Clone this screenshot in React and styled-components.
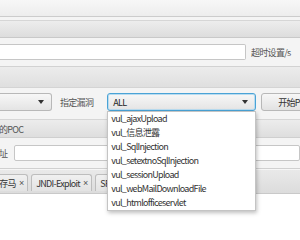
import React from "react";
import styled, { createGlobalStyle } from "styled-components";

const Global = createGlobalStyle`
  html, body { margin: 0; padding: 0; }
  body {
    width: 300px; height: 240px; overflow: hidden;
    background: #f4f4f4;
    font-family: "Noto Sans CJK SC", "Noto Sans", sans-serif;
    font-size: 9px; letter-spacing: -0.7px; color: #3a3a3a;
  }
`;

const Page = styled.div`
  display: flex; flex-direction: column; width: 300px; height: 240px; overflow: hidden;
`;

const Band = styled.div`
  height: ${p => p.$h}px;
  flex: none;
  background: ${p => p.$bg};
  border-bottom: 1px solid ${p => p.$line || "#d0d0d0"};
`;

const FieldRow = styled.div`
  display: flex; align-items: center; gap: 5px;
  padding: 6px 0 6px 0; flex: none;
  border-bottom: 1px solid #d2d2d2;
`;

const TextInput = styled.div`
  height: 14px; width: ${p => p.$w ? `${p.$w}px` : "auto"};
  flex: ${p => p.$w ? "none" : "1"};
  background: #fff;
  border: 1px solid #c6c6c6;
  border-left: ${p => p.$open ? "none" : "1px solid #c6c6c6"};
  border-radius: ${p => p.$open ? "0 2px 2px 0" : "2px"};
`;

const Label = styled.span`
  color: #555; font-size: 9px; white-space: nowrap; line-height: 1;
  margin-left: ${p => p.$ml || 0}px;
  margin-top: ${p => p.$mt || 0}px;
`;

const ControlRow = styled.div`
  display: flex; align-items: center;
  padding: 5px 0 8px 0; flex: none;
  border-bottom: 1px solid #d6d6d6;
`;

const ComboWrap = styled.div`
  position: relative; flex: none; margin-left: ${p => p.$ml || 0}px;
`;

const Combo = styled.div`
  display: flex; align-items: center; justify-content: space-between;
  box-sizing: border-box;
  width: ${p => p.$w}px; height: 18px; flex: none;
  padding: 0 7px 0 5px;
  background: linear-gradient(#f7f7f7, #e4e4e4);
  border: 1px solid ${p => p.$focus ? "#4aa3d6" : "#b8b8b8"};
  border-left: ${p => p.$cut ? "none" : undefined};
  box-shadow: ${p => p.$focus ? "inset 0 0 0 1px #b9dcf0" : "none"};
  border-radius: ${p => p.$cut ? "0 3px 3px 0" : "3px"};
  font-size: 9px; color: #222;
`;

const Arrow = styled.span`
  width: 0; height: 0;
  border-left: 3.5px solid transparent; border-right: 3.5px solid transparent;
  border-top: 4px solid #333;
`;

const Button = styled.div`
  box-sizing: border-box; height: 18px; flex: none;
  margin-left: 5px; padding: 0 0 0 16px; width: 60px;
  display: flex; align-items: center;
  background: linear-gradient(#f7f7f7, #e2e2e2);
  border: 1px solid #b8b8b8; border-radius: 3px;
  font-size: 9px; color: #333; white-space: nowrap; overflow: hidden;
`;

const Popup = styled.ul`
  position: absolute; left: 0; top: 100%; z-index: 5;
  width: 149px; box-sizing: border-box; margin: 0; padding: 0;
  list-style: none; background: #fff;
  border: 1px solid #c4c4c4;
  box-shadow: 1px 2px 4px rgba(0,0,0,0.25);
`;

const Item = styled.li`
  height: 14px; line-height: 14px; padding-left: 3px;
  font-size: 9px; color: #333; white-space: nowrap;
`;

const TitleBar = styled.div`
  height: 17px; flex: none; display: flex; align-items: center;
  background: linear-gradient(#ececec, #dedede);
  border-bottom: 1px solid #cfcfcf;
  overflow: hidden;
`;

const Content = styled.div`
  display: flex; align-items: center; gap: 7px;
  padding: 7px 0 7px 0; flex: none;
  border-bottom: 1px solid #d0d0d0;
  overflow: hidden;
`;

const TabHeader = styled.div`
  display: flex; align-items: flex-end; gap: 3px;
  height: 25px; flex: none; box-sizing: border-box;
  padding: 0 0 2px 0;
  background: linear-gradient(#e9e9e9, #dcdcdc);
  border-top: 1px solid #f6f6f6;
  border-bottom: 1px solid #c9c9c9;
  overflow: hidden;
`;

const Tab = styled.div`
  flex: none; height: 17px; box-sizing: border-box;
  display: flex; align-items: center; gap: 3px;
  padding: 0 3px 0 4px;
  background: linear-gradient(#f0f0f0, #e3e3e3);
  border: 1px solid #bdbdbd; border-bottom: none;
  border-radius: 3px 3px 0 0;
  margin-left: ${p => p.$ml || 0}px;
  font-size: 9px; color: #333; white-space: nowrap;
`;

const Close = styled.span`
  font-family: "Liberation Sans", sans-serif;
  font-size: 9px; letter-spacing: 0; color: #555;
`;

const White = styled.div`
  flex: 1; background: #fff;
`;

export default function App() {
  const items = [
    "vul_ajaxUpload",
    "vul_信息泄露",
    "vul_SqlInjection",
    "vul_setextnoSqlInjection",
    "vul_sessionUpload",
    "vul_webMailDownloadFile",
    "vul_htmlofficeservlet",
  ];
  return (
    <Page>
      <Global />
      <Band $h={16} $bg="linear-gradient(#f7f7f7, #ededed)" $line="#cccccc" />
      <Band $h={3} $bg="#f4f4f4" $line="#d6d6d6" />
      <Band $h={16} $bg="linear-gradient(#ededed, #dddddd)" $line="#c9c9c9" />
      <FieldRow>
        <TextInput $w={245} $open />
        <Label>超时设置/s</Label>
      </FieldRow>
      <Band $h={20} $bg="linear-gradient(#ececec, #dfdfdf)" $line="#d4d4d4" />
      <ControlRow>
        <Combo $w={52} $cut>
          <span />
          <Arrow />
        </Combo>
        <Label $ml={8}>指定漏洞</Label>
        <ComboWrap $ml={14}>
          <Combo $w={149} $focus>
            <span>ALL</span>
            <Arrow />
          </Combo>
          <Popup>
            {items.map(t => <Item key={t}>{t}</Item>)}
          </Popup>
        </ComboWrap>
        <Button>开始POC检测</Button>
      </ControlRow>
      <TitleBar>
        <Label $ml={-1} $mt={2}>的POC</Label>
      </TitleBar>
      <Content>
        <Label $ml={-1}>址</Label>
        <TextInput />
      </Content>
      <TabHeader>
        <Tab $ml={-14}>内存马<Close>×</Close></Tab>
        <Tab>JNDI-Exploit<Close>×</Close></Tab>
        <Tab>SPEL<Close>×</Close></Tab>
      </TabHeader>
      <White />
    </Page>
  );
}
